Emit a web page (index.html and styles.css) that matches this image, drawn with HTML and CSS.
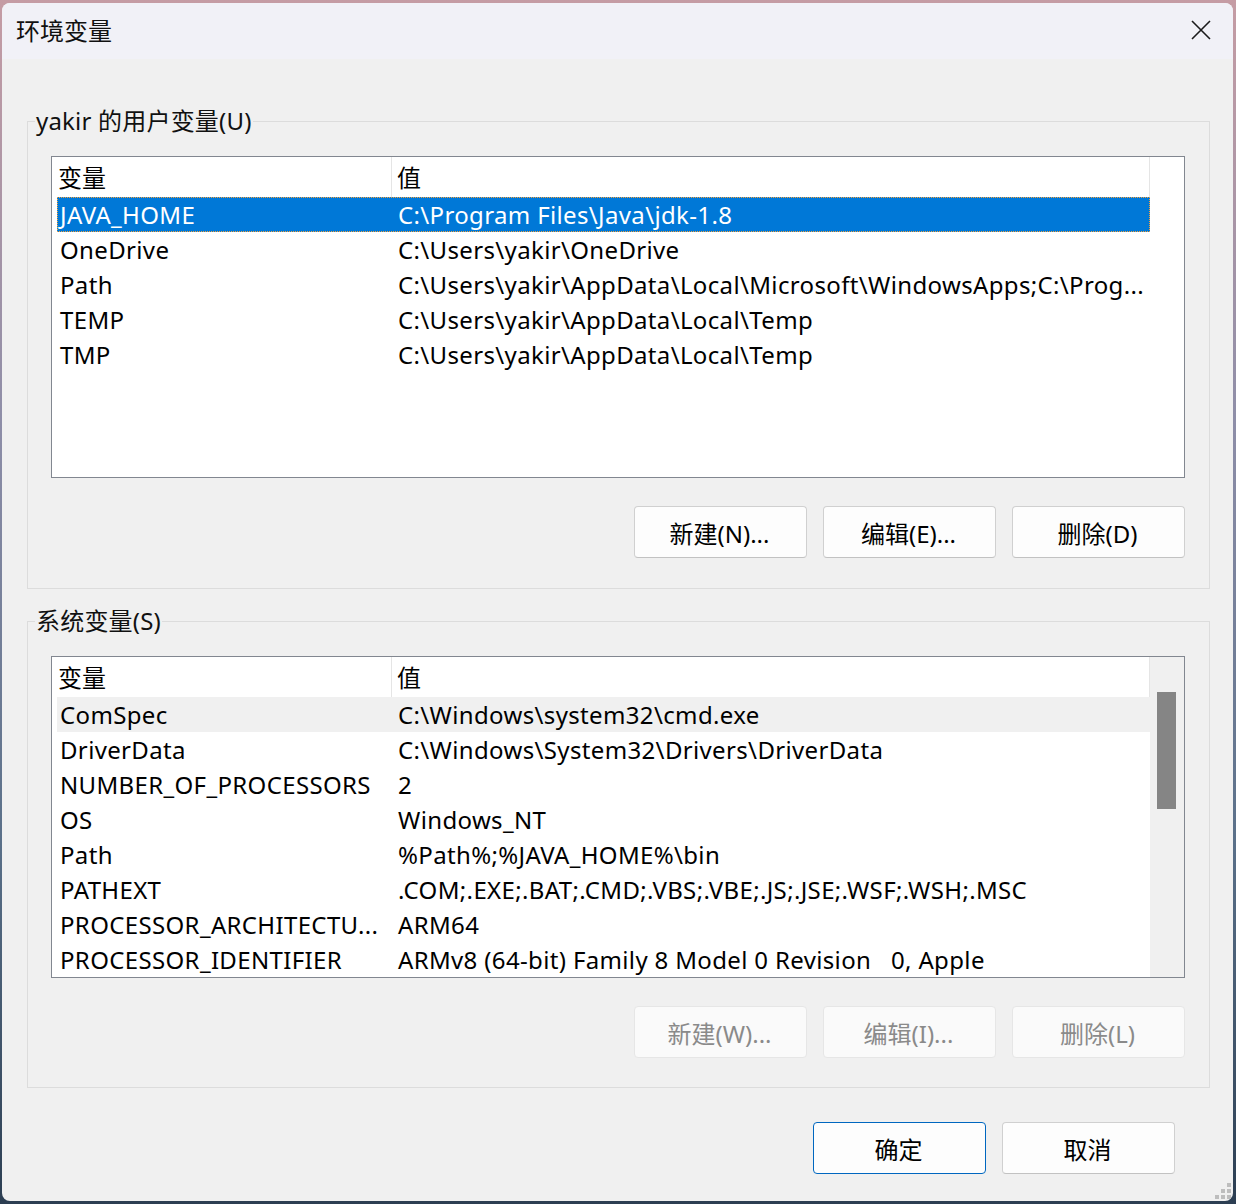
FILE: index.html
```html
<!DOCTYPE html>
<html lang="zh-CN">
<head>
<meta charset="utf-8">
<title>环境变量</title>
<link rel="stylesheet" href="styles.css">
</head>
<body>
<div class="window">
  <div class="titlebar">
    <span class="title">环境变量</span>
    <span class="close">
      <svg width="20" height="20" viewBox="0 0 20 20"><path d="M1 1 L19 19 M19 1 L1 19" stroke="#1b1b1b" stroke-width="1.6" fill="none"/></svg>
    </span>
  </div>
  <div class="content">
    <fieldset class="group group1">
      <legend>yakir 的用户变量(U)</legend>
      <div class="list">
        <div class="list-main">
          <div class="header">
            <div class="hcell h1">变量</div>
            <div class="hcell h2">值</div>
          </div>
          <div class="row selected"><span class="c1">JAVA_HOME</span><span class="c2">C:\Program Files\Java\jdk-1.8</span></div>
          <div class="row"><span class="c1">OneDrive</span><span class="c2">C:\Users\yakir\OneDrive</span></div>
          <div class="row"><span class="c1">Path</span><span class="c2">C:\Users\yakir\AppData\Local\Microsoft\WindowsApps;C:\Prog...</span></div>
          <div class="row"><span class="c1">TEMP</span><span class="c2">C:\Users\yakir\AppData\Local\Temp</span></div>
          <div class="row"><span class="c1">TMP</span><span class="c2">C:\Users\yakir\AppData\Local\Temp</span></div>
        </div>
      </div>
      <div class="btns">
        <button class="btn">新建(N)...</button>
        <button class="btn">编辑(E)...</button>
        <button class="btn">删除(D)</button>
      </div>
    </fieldset>

    <fieldset class="group group2">
      <legend>系统变量(S)</legend>
      <div class="list list-scroll">
        <div class="list-main">
          <div class="header">
            <div class="hcell h1">变量</div>
            <div class="hcell h2">值</div>
          </div>
          <div class="row hover"><span class="c1">ComSpec</span><span class="c2">C:\Windows\system32\cmd.exe</span></div>
          <div class="row"><span class="c1">DriverData</span><span class="c2">C:\Windows\System32\Drivers\DriverData</span></div>
          <div class="row"><span class="c1">NUMBER_OF_PROCESSORS</span><span class="c2">2</span></div>
          <div class="row"><span class="c1">OS</span><span class="c2">Windows_NT</span></div>
          <div class="row"><span class="c1">Path</span><span class="c2">%Path%;%JAVA_HOME%\bin</span></div>
          <div class="row"><span class="c1">PATHEXT</span><span class="c2">.COM;.EXE;.BAT;.CMD;.VBS;.VBE;.JS;.JSE;.WSF;.WSH;.MSC</span></div>
          <div class="row"><span class="c1">PROCESSOR_ARCHITECTU...</span><span class="c2">ARM64</span></div>
          <div class="row"><span class="c1">PROCESSOR_IDENTIFIER</span><span class="c2">ARMv8 (64-bit) Family 8 Model 0 Revision   0, Apple</span></div>
        </div>
        <div class="scrollbar"><div class="thumb"></div></div>
      </div>
      <div class="btns">
        <button class="btn" disabled>新建(W)...</button>
        <button class="btn" disabled>编辑(I)...</button>
        <button class="btn" disabled>删除(L)</button>
      </div>
    </fieldset>

    <div class="footer">
      <button class="btn primary">确定</button>
      <button class="btn">取消</button>
    </div>
  </div>
  <div class="grip">
    <i class="d d1"></i>
    <i class="d d2"></i><i class="d d3"></i>
    <i class="d d4"></i><i class="d d5"></i><i class="d d6"></i>
  </div>
</div>
</body>
</html>
```

FILE: styles.css
```css
* { box-sizing: border-box; }

html, body {
  margin: 0;
  padding: 0;
}

body {
  width: 1236px;
  height: 1204px;
  overflow: hidden;
  background: linear-gradient(180deg, #c59ca4 0%, #8e8ea8 35%, #5a7089 70%, #2c3e52 100%);
  font-family: "Noto Sans", "Noto Sans CJK SC", sans-serif;
  font-size: 24px;
  color: #000;
}

.window {
  position: relative;
  margin: 3px 0 0 2px;
  width: 1231px;
  height: 1198px;
  border-radius: 8px;
  background: #f0f0f0;
  overflow: hidden;
  display: flex;
  flex-direction: column;
}

.titlebar {
  height: 56px;
  flex: none;
  background: #f1f1f7;
  display: flex;
  align-items: center;
  justify-content: space-between;
  padding: 0 22px 3px 14px;
}

.title {
  font-family: "Noto Sans CJK SC", sans-serif;
  font-size: 24px;
  line-height: 30px;
  color: #111;
}

.close {
  display: flex;
  width: 20px;
  height: 20px;
  margin-top: 1px;
}

.content {
  flex: 1;
  padding: 47px 23px 0 25px;
  display: flex;
  flex-direction: column;
}

.group {
  margin: 0;
  padding: 0 24px 30px 23px;
  border: 1px solid #dcdcdc;
  min-width: 0;
}

.group2 {
  margin-top: 17px;
  padding-bottom: 29px;
}

.group legend {
  margin-left: -16px;
  padding: 0 1px;
  font-size: 24px;
  line-height: 30px;
  color: #111;
  letter-spacing: 0.2px;
}

.list {
  margin-top: 20px;
  height: 322px;
  border: 1px solid #828790;
  background: #fff;
  display: flex;
  overflow: hidden;
}

.list-main {
  width: 1098px;
  flex: none;
}

.header {
  display: flex;
  height: 40px;
}

.hcell {
  height: 40px;
  line-height: 40px;
  border-right: 1px solid #e5e5e5;
  font-family: "Noto Sans CJK SC", sans-serif;
  white-space: nowrap;
}

.h1 {
  width: 340px;
  padding-left: 6px;
}

.h2 {
  width: 758px;
  padding-left: 5px;
}

.row {
  display: flex;
  height: 35px;
  line-height: 35px;
  margin-left: 5px;
  width: 1093px;
  white-space: pre;
  letter-spacing: 0.35px;
}

.row .c1 {
  width: 338px;
  flex: none;
  padding-left: 3px;
  overflow: hidden;
}

.row .c2 {
  flex: 1;
  padding-left: 3px;
  overflow: hidden;
}

.row.selected {
  background: #0078d7;
  color: #fff;
  outline: 1px dotted #f5a23c;
  outline-offset: -1px;
}

.row.hover {
  background: #f0f0f0;
}

.scrollbar {
  flex: 1;
  background: #f0f0f0;
  padding: 35px 0 0 7px;
}

.thumb {
  width: 19px;
  height: 117px;
  background: #858585;
}

.btns {
  display: flex;
  justify-content: flex-end;
  gap: 16px;
  margin-top: 28px;
}

.btn {
  width: 173px;
  height: 52px;
  border: 1px solid #d0d0d0;
  border-bottom-color: #c2c2c2;
  border-radius: 4px;
  background: #fdfdfd;
  font-family: "Noto Sans", "Noto Sans CJK SC", sans-serif;
  font-size: 24px;
  color: #000;
  padding: 0 2px 0 0;
}

.btn:disabled {
  background: #fafafa;
  border-color: #e6e6e6;
  color: #8a8a8a;
}

.btn.primary {
  border-color: #0067c0;
}

.footer {
  display: flex;
  justify-content: flex-end;
  gap: 16px;
  margin-top: 34px;
  padding-right: 35px;
}

.grip {
  position: absolute;
  right: 2px;
  bottom: 2px;
  width: 16px;
  height: 16px;
}

.d {
  position: absolute;
  width: 4px;
  height: 4px;
  background: #bdbdbd;
}
.d1 { right: 0; top: 0; }
.d2 { right: 6px; top: 6px; }
.d3 { right: 0; top: 6px; }
.d4 { right: 12px; top: 12px; }
.d5 { right: 6px; top: 12px; }
.d6 { right: 0; top: 12px; }
```
